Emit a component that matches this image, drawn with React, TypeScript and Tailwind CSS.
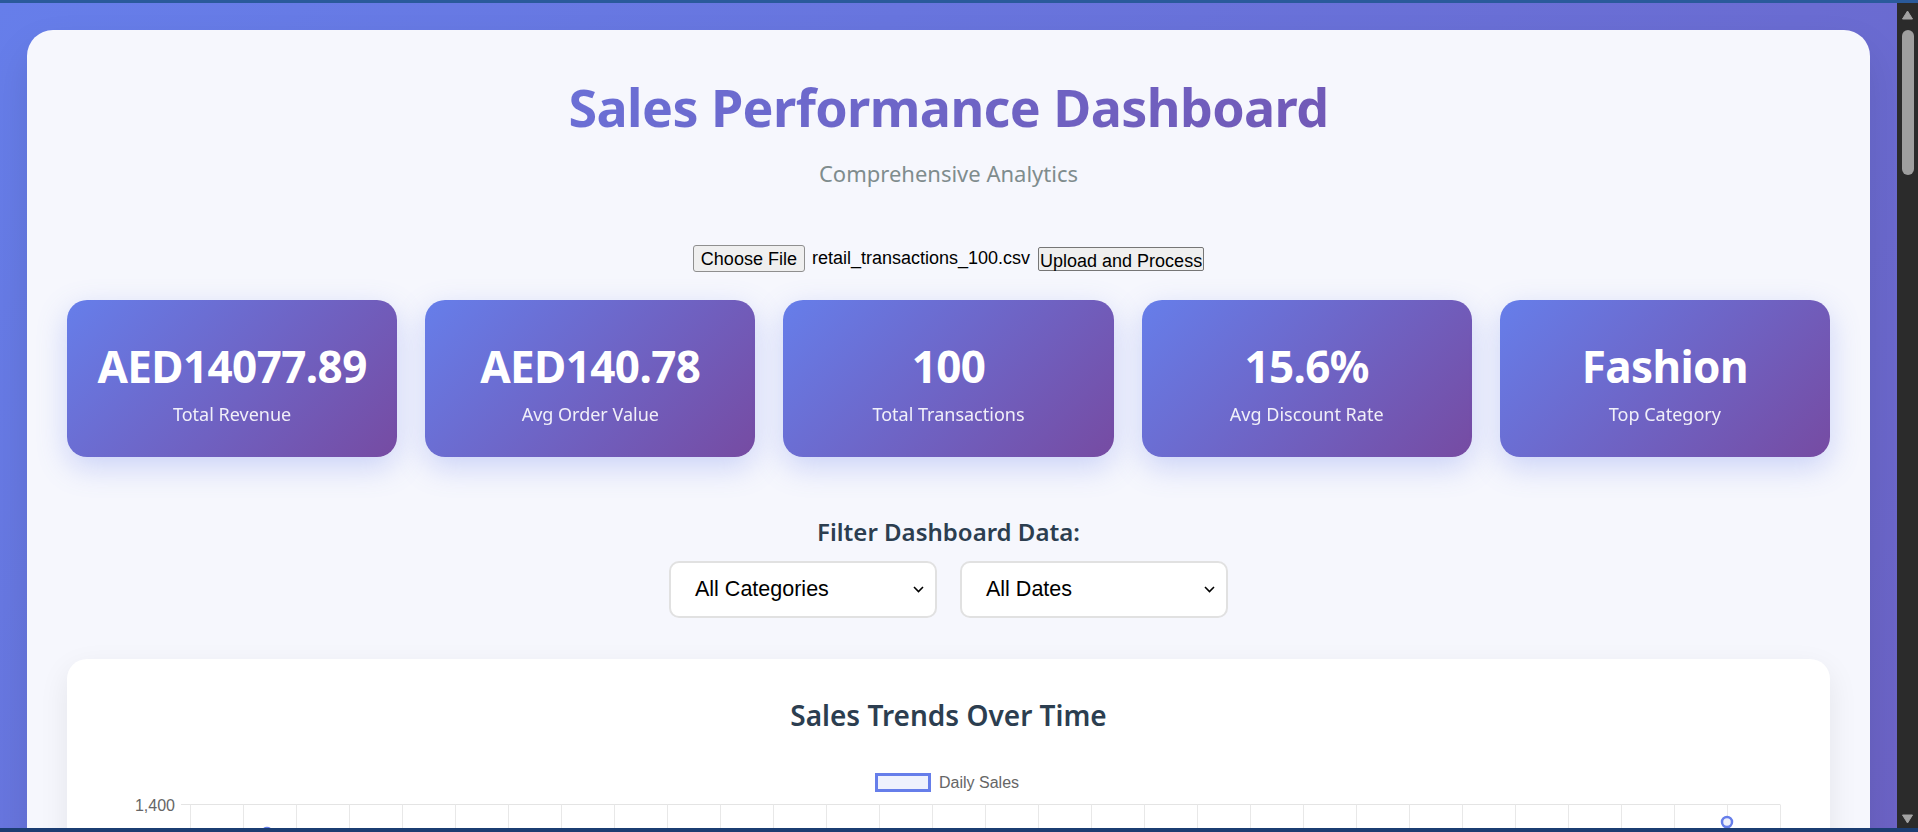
import React from 'react';

const stats = [
  { value: 'AED14077.89', label: 'Total Revenue' },
  { value: 'AED140.78', label: 'Avg Order Value' },
  { value: '100', label: 'Total Transactions' },
  { value: '15.6%', label: 'Avg Discount Rate' },
  { value: 'Fashion', label: 'Top Category' },
];

function Chevron() {
  return (
    <svg width="11" height="7" viewBox="0 0 11 7" className="pointer-events-none">
      <path d="M1 1 L5.5 5.5 L10 1" fill="none" stroke="#000" strokeWidth="1.6" />
    </svg>
  );
}

function FilterSelect({ label }: { label: string }) {
  return (
    <div className="w-[268px] h-[57px] rounded-[10px] border-2 border-[#e1e1e1] bg-white flex items-center justify-between pl-[24px] pr-[11px]">
      <span className="text-[21.5px] text-black font-['Liberation_Sans',Arial,sans-serif]">{label}</span>
      <Chevron />
    </div>
  );
}

function TrendChart() {
  const cols = Array.from({ length: 31 }, (_, i) => 123 + 53 * i);
  return (
    <svg width="1763" height="120" viewBox="0 0 1763 120" className="block">
      <rect x="809.5" y="14.5" width="53" height="16" fill="rgba(102,126,234,0.1)" stroke="#667eea" strokeWidth="3" />
      <text x="872" y="28" fontSize="16" fill="#666" fontFamily="Liberation Sans, Arial, sans-serif">Daily Sales</text>
      <text x="108" y="50.5" fontSize="16" fill="#666" textAnchor="end" fontFamily="Liberation Sans, Arial, sans-serif">1,400</text>
      <line x1="114" y1="44.5" x2="1713" y2="44.5" stroke="#e4e4e4" strokeWidth="1" />
      {cols.map((x) => (
        <line key={x} x1={x + 0.5} y1="44.5" x2={x + 0.5} y2="120" stroke="#e8e8e8" strokeWidth="1" />
      ))}
      <path d="M1643 120 L1660 63 L1677 120" fill="rgba(102,126,234,0.1)" stroke="#667eea" strokeWidth="2.5" />
      <circle cx="1660" cy="62" r="5" fill="#eef0fc" stroke="#667eea" strokeWidth="2.5" />
      <circle cx="200" cy="73" r="5" fill="#eef0fc" stroke="#667eea" strokeWidth="2.5" />
    </svg>
  );
}

export default function App() {
  return (
    <div className="w-full h-[832px] overflow-hidden flex flex-col bg-[#2b2b2b] font-['Noto_Sans',sans-serif]">
      <div className="h-[3px] bg-[#2a5a9b] shrink-0" />
      <div className="flex flex-1 min-h-0">
        <div className="flex-1 overflow-hidden bg-[linear-gradient(135deg,#667eea_0%,#6c63c6_100%)] px-[27px] pt-[27px]">
          <div className="rounded-[26px] bg-[#f6f7fd] px-[40px] pt-[45px] pb-[40px] shadow-[0_20px_40px_rgba(0,0,0,0.1)]">
            <h1 className="h-[64px] leading-[64px] text-center text-[52px] font-bold tracking-[-0.6px] bg-[linear-gradient(135deg,#667eea_0%,#764ba2_100%)] bg-clip-text text-transparent">
              Sales Performance Dashboard
            </h1>
            <p className="mt-[19px] h-[30px] leading-[30px] text-center text-[22px] text-[#7f8c8d]">
              Comprehensive Analytics
            </p>

            <div className="mt-[57px] h-[27px] flex items-center justify-center font-['Liberation_Sans',Arial,sans-serif] text-[18px] text-black">
              <button className="h-[27px] px-[7px] rounded-[3px] border border-[#8f8f8f] bg-[#efefef]">Choose File</button>
              <span className="ml-[7px]">retail_transactions_100.csv</span>
              <button className="ml-[8px] h-[24px] px-[1px] rounded-[2px] border border-[#767676] bg-[#efefef]">Upload and Process</button>
            </div>

            <div className="mt-[28px] grid grid-cols-5 gap-[28px]">
              {stats.map((s) => (
                <div
                  key={s.label}
                  className="h-[157px] rounded-[20px] bg-[linear-gradient(135deg,#667eea_0%,#764ba2_100%)] text-white flex flex-col items-center shadow-[0_10px_30px_rgba(102,126,234,0.3)]"
                >
                  <div className="mt-[40px] h-[52px] leading-[52px] text-[44px] font-bold tracking-[-0.6px]">{s.value}</div>
                  <div className="mt-[8px] h-[28px] leading-[28px] text-[18px] opacity-90">{s.label}</div>
                </div>
              ))}
            </div>

            <div className="mt-[60px] h-[30px] leading-[30px] text-center text-[24px] font-semibold text-[#2c3e50]">
              Filter Dashboard Data:
            </div>
            <div className="mt-[14px] flex justify-center gap-[23px]">
              <FilterSelect label="All Categories" />
              <FilterSelect label="All Dates" />
            </div>

            <div className="mt-[41px] rounded-[20px] bg-white pt-[36px] h-[400px] shadow-[0_10px_30px_rgba(0,0,0,0.08)]">
              <h2 className="h-[40px] leading-[40px] text-center text-[28px] font-semibold text-[#2c3e50]">
                Sales Trends Over Time
              </h2>
              <div className="mt-[25px]">
                <TrendChart />
              </div>
            </div>
          </div>
        </div>
        <div className="w-[21px] shrink-0 bg-[#2b2b2b] flex flex-col items-center pt-[7px] pb-[4px]">
          <svg width="11" height="10" viewBox="0 0 11 10">
            <path d="M5.5 1 L10.5 9 L0.5 9 Z" fill="#a3a3a3" stroke="#a3a3a3" strokeLinejoin="round" />
          </svg>
          <div className="mt-[10px] w-[12px] h-[145px] rounded-full bg-[#9f9f9f]" />
          <div className="flex-1" />
          <svg width="11" height="10" viewBox="0 0 11 10">
            <path d="M0.5 1 L10.5 1 L5.5 9 Z" fill="#a3a3a3" stroke="#a3a3a3" strokeLinejoin="round" />
          </svg>
        </div>
      </div>
      <div className="h-[4px] bg-[#1b3d72] shrink-0" />
    </div>
  );
}
